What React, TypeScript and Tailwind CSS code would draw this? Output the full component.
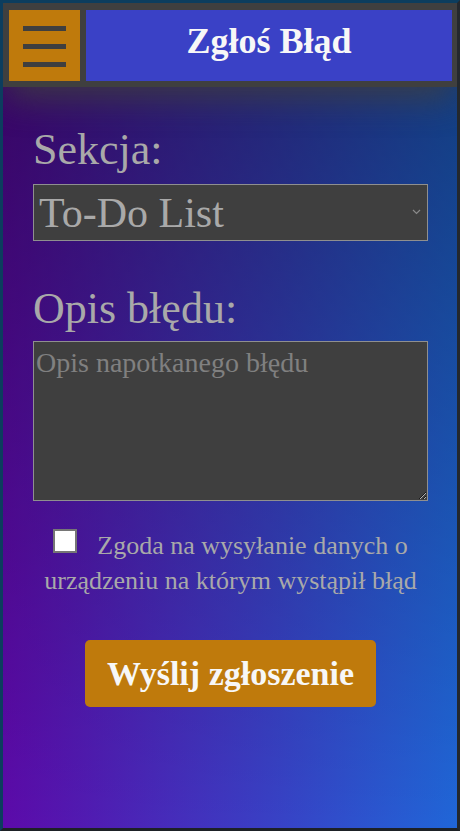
import { useState } from 'react';

export default function App() {
    const [zgoda, setZgoda] = useState(false);

    return (
        <div className="w-[460px] h-[831px] overflow-hidden flex flex-col border-[3px] border-t-[#0c3d5e] border-l-[#0c3d5e] border-r-[#24282d] border-b-[#1d2126] font-['Liberation_Serif',serif]">
            {/* Pasek górny */}
            <header className="relative z-10 flex gap-[6px] bg-[#3f3f3f] pt-[7px] pb-[6px] pl-[6px] pr-[5px] shadow-[0_14px_34px_-4px_rgba(63,63,63,0.85)]">
                <button className="w-[71px] h-[71px] shrink-0 bg-[#bf7a0c] flex flex-col items-center justify-center gap-[13px] pt-[2px]">
                    <span className="block w-[43px] h-[5px] bg-[#3f3f3f]" />
                    <span className="block w-[43px] h-[5px] bg-[#3f3f3f]" />
                    <span className="block w-[43px] h-[5px] bg-[#3f3f3f]" />
                </button>
                <div className="flex-1 h-[71px] bg-[#3a41c6] flex items-center justify-center pb-[9px]">
                    <h1 className="text-[36px] leading-none font-bold text-[#f7f7f7]">Zgłoś Błąd</h1>
                </div>
            </header>

            {/* Formularz */}
            <main className="flex-1 bg-[linear-gradient(to_bottom,rgba(0,0,0,0.4),rgba(0,0,0,0)),linear-gradient(to_right,#5c0aaa,#2066d8)] pl-[30px] pt-[37px]">
                <form className="w-[395px] flex flex-col" onSubmit={(e) => e.preventDefault()}>
                    <label htmlFor="sekcja" className="text-[44px] leading-[52px] text-[#a9a9a9]">
                        Sekcja:
                    </label>
                    <div className="relative mt-[8px]">
                        <select
                            id="sekcja"
                            className="appearance-none w-full h-[57px] bg-[#3f3f3f] border border-[#8f8f8f] text-[#a9a9a9] text-[42px] leading-none pl-[5px] outline-none"
                        >
                            <option>To-Do List</option>
                        </select>
                        <svg className="absolute right-[7px] top-[25px] w-[9px] h-[6px]" viewBox="0 0 9 6" fill="none">
                            <path d="M1 1l3.5 3.5L8 1" stroke="#8a8a8a" strokeWidth="1.2" />
                        </svg>
                    </div>

                    <label htmlFor="opis" className="mt-[42px] text-[44px] leading-[52px] text-[#a9a9a9]">
                        Opis błędu:
                    </label>
                    <textarea
                        id="opis"
                        placeholder="Opis napotkanego błędu"
                        className="mt-[6px] h-[160px] bg-[#3f3f3f] border border-[#8f8f8f] text-[28px] leading-[1.2] text-[#a9a9a9] placeholder:text-[#808080] pt-[4px] pl-[2px] outline-none"
                    />

                    <p className="mt-[27px] text-center text-[26px] leading-[35px] text-[#a9a9a9]">
                        <input
                            type="checkbox"
                            checked={zgoda}
                            onChange={(e) => setZgoda(e.target.checked)}
                            className="appearance-none inline-block w-[24px] h-[24px] mb-[1px] mr-5 bg-white border-2 border-[#767676] checked:bg-[#bf7a0c]"
                        />
                        Zgoda na wysyłanie danych o urządzeniu na którym wystąpił błąd
                    </p>

                    <button
                        type="submit"
                        className="mt-[42px] mx-auto w-[291px] h-[67px] rounded-[5px] bg-[#bf7a0c] text-[#f7f7f7] font-bold text-[34px] leading-[67px]"
                    >
                        Wyślij zgłoszenie
                    </button>
                </form>
            </main>
        </div>
    );
}
